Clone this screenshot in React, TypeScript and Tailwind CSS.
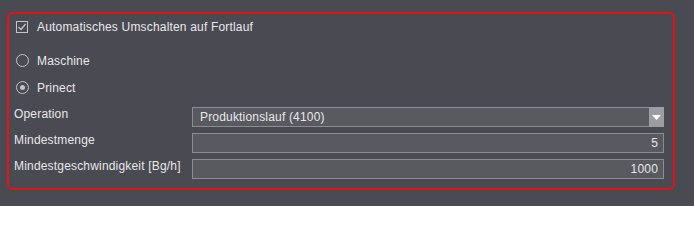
export default function App() {
  const font = { fontFamily: '"Liberation Sans", Arial, sans-serif' };
  return (
    <div className="w-[694px] h-[206px] bg-[#4a4a52] pt-[12px] pl-[7px] text-[12px] tracking-[0.18px] text-[#e8e8ea]" style={font}>
      <div className="w-[668px] h-[178px] border-2 border-[#e3121b] rounded-[6px] flex flex-col">
        {/* Checkbox */}
        <div className="mt-[6px] h-[14px] flex items-center pl-[7px]">
          <span className="w-[12px] h-[12px] border border-[#c4c4c8] flex items-center justify-center">
            <svg width="10" height="10" viewBox="0 0 10 10">
              <path d="M1.5 5 L4 7.5 L8.5 2" stroke="#c4c4c8" strokeWidth="1.3" fill="none" />
            </svg>
          </span>
          <span className="ml-[9px]">Automatisches Umschalten auf Fortlauf</span>
        </div>

        {/* Radios */}
        <div className="mt-[19px] h-[15px] flex items-center pl-[7px]">
          <span className="w-[13px] h-[13px] rounded-full border border-[#c4c4c8]" />
          <span className="ml-[8px]">Maschine</span>
        </div>
        <div className="mt-[12px] h-[15px] flex items-center pl-[7px]">
          <span className="w-[13px] h-[13px] rounded-full border border-[#c4c4c8] flex items-center justify-center">
            <span className="w-[5px] h-[5px] rounded-full bg-[#c4c4c8]" />
          </span>
          <span className="ml-[8px]">Prinect</span>
        </div>

        {/* Form rows */}
        <div className="mt-[12px] flex flex-col gap-[6px] pl-[5px]">
          <div className="flex items-start h-[20px]">
            <span className="w-[178px] leading-[14px]">Operation</span>
            <div className="w-[472px] h-[20px] border border-[#8c8c92] bg-[#595960] flex items-center">
              <span className="flex-1 pl-[7px]">Produktionslauf (4100)</span>
              <span className="w-[15px] h-[20px] -mr-px -my-px bg-[#9c9ca1] flex items-center justify-center">
                <svg width="9" height="5" viewBox="0 0 9 5">
                  <path d="M0 0 H9 L4.5 5 Z" fill="#ffffff" />
                </svg>
              </span>
            </div>
          </div>
          <div className="flex items-start h-[20px]">
            <span className="w-[178px] leading-[14px]">Mindestmenge</span>
            <div className="w-[472px] h-[20px] border border-[#8c8c92] bg-[#595960] flex items-center justify-end pr-[5px]">
              5
            </div>
          </div>
          <div className="flex items-start h-[20px]">
            <span className="w-[178px] leading-[14px]">Mindestgeschwindigkeit [Bg/h]</span>
            <div className="w-[472px] h-[20px] border border-[#8c8c92] bg-[#595960] flex items-center justify-end pr-[5px]">
              1000
            </div>
          </div>
        </div>
      </div>
    </div>
  );
}
